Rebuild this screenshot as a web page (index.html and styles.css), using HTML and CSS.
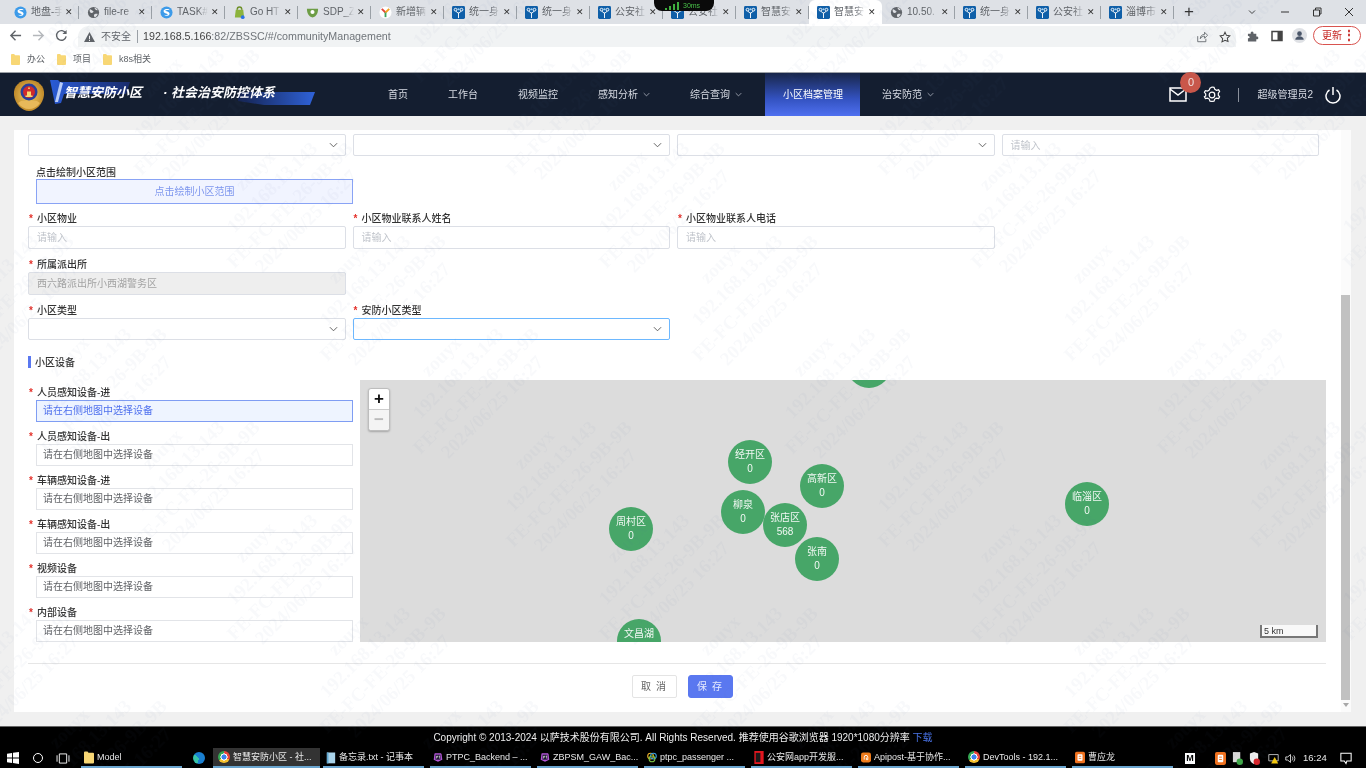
FILE: index.html
```html
<!DOCTYPE html>
<html lang="zh-CN">
<head>
<meta charset="utf-8">
<title>智慧安防小区</title>
<link rel="stylesheet" href="styles.css">
</head>
<body>
<svg class="defs" aria-hidden="true">
  <defs>
    <symbol id="i-sphere" viewBox="0 0 14 14"><circle cx="7" cy="7" r="6.5" fill="#3d9be9"/><path d="M4 4.5c2-2 6-1.5 6.5 0-2-.5-4-.5-5 .8 2 .2 5 1 4.800 3.200-.3 2-4.300 3-6 1 2 .6 4 .3 4.200-.8C8 8 3 8 4 4.500z" fill="#fff"/></symbol>
    <symbol id="i-globe" viewBox="0 0 14 14"><circle cx="7" cy="7" r="6" fill="#5f6368"/><path d="M3 3.500c2 0 2 1.500 3.500 2S6 8 4.500 7.500 2.500 5 3 3.500zM8 9c1.500-.8 3-.5 3.500-.5-.5 2-2 3.500-3 3.500S7 10 8 9zM8 2c1.500 0 3 1 3.500 2.500C10 5 8.500 4 8 2z" fill="#dfe1e5"/></symbol>
    <symbol id="i-go" viewBox="0 0 14 14"><path d="M3 4h8l1 8.500H2z" fill="#8cb33c"/><path d="M4.500 4c0-4 5-4 5 0" stroke="#6d8f28" fill="none" stroke-width="1.500"/><circle cx="10.500" cy="12" r="2" fill="#2a72e8"/></symbol>
    <symbol id="i-shield" viewBox="0 0 14 14"><path d="M1 3h12c0 5-2 8.500-6 9.500C3 11.500 1 8 1 3z" fill="#6d9d45"/><circle cx="7" cy="6.500" r="2.200" fill="#fff"/></symbol>
    <symbol id="i-y" viewBox="0 0 14 14"><circle cx="7" cy="7" r="6.500" fill="#fff"/><path d="M3 3l4 4" stroke="#e4453a" stroke-width="2"/><path d="M11 3L7 7" stroke="#f2a51f" stroke-width="2"/><path d="M7 7v5" stroke="#3ca55c" stroke-width="2"/></symbol>
    <symbol id="i-tree" viewBox="0 0 14 14"><rect width="14" height="14" rx="1.500" fill="#0f5fa8"/><path d="M7 13V7M7 8L4 5.500M7 8l3-2.500" stroke="#fff" stroke-width="1" fill="none"/><circle cx="3.800" cy="4" r="1.500" fill="none" stroke="#fff"/><circle cx="10.200" cy="4" r="1.500" fill="none" stroke="#fff"/><circle cx="7" cy="3.500" r="1.200" fill="#9fd0f5"/></symbol>
    <symbol id="i-folder" viewBox="0 0 10 12"><path d="M0 1a1 1 0 0 1 1-1h2.500l1 1.200H9a1 1 0 0 1 1 1V11a1 1 0 0 1-1 1H1a1 1 0 0 1-1-1z" fill="#f8d775"/></symbol>
    <symbol id="i-chev" viewBox="0 0 10 6"><path d="M1 1l4 4 4-4" fill="none" stroke="currentColor" stroke-width="1"/></symbol>
    <symbol id="i-orange" viewBox="0 0 12 14"><rect width="12" height="14" rx="2" fill="#f0711e"/><rect x="3" y="3" width="6" height="8" rx="1" fill="#fff"/><rect x="4.500" y="5" width="3" height="1" fill="#f0711e"/><rect x="4.500" y="7.500" width="3" height="1" fill="#f0711e"/></symbol>
    <symbol id="i-term" viewBox="0 0 14 14"><path d="M2 2a1 1 0 0 1 1-1h8l1 1 1 8-6 3-6-3z" fill="#b455d8"/><rect x="3.500" y="3" width="7" height="7" fill="#18112a"/><path d="M5 5v3.500M5 5h1.500v1.500H5M8 5h2M9 5v3.500" stroke="#fff" stroke-width=".8" fill="none"/></symbol>
    <pattern id="wm" x="185" y="100" width="372" height="372" patternUnits="userSpaceOnUse">
      <g id="wm-cell" transform="rotate(-45)" class="wm-text">
        <text y="-26">zouyx</text>
        <text y="-2">192.168.13.143</text>
        <text y="23">FE-FC-FE-26-9B-9B</text>
        <text y="46">2024/06/25 16:27</text>
      </g>
      <use href="#wm-cell" x="-93" y="-93"/>
      <use href="#wm-cell" x="-93" y="279"/>
      <use href="#wm-cell" x="0" y="372"/>
      <use href="#wm-cell" x="93" y="93"/>
      <use href="#wm-cell" x="93" y="465"/>
      <use href="#wm-cell" x="186" y="186"/>
      <use href="#wm-cell" x="279" y="-93"/>
      <use href="#wm-cell" x="279" y="279"/>
      <use href="#wm-cell" x="372" y="0"/>
      <use href="#wm-cell" x="372" y="372"/>
      <use href="#wm-cell" x="465" y="93"/>
      <use href="#wm-cell" x="465" y="465"/>
    </pattern>
  </defs>
</svg>

<div class="tabstrip">
  <div class="tab"><svg class="fav"><use href="#i-sphere"/></svg><span class="tab-t">地盘-手</span><span class="tab-x">✕</span></div>
  <div class="tab"><svg class="fav"><use href="#i-globe"/></svg><span class="tab-t">file-re</span><span class="tab-x">✕</span></div>
  <div class="tab"><svg class="fav"><use href="#i-sphere"/></svg><span class="tab-t">TASK#</span><span class="tab-x">✕</span></div>
  <div class="tab"><svg class="fav"><use href="#i-go"/></svg><span class="tab-t">Go HT</span><span class="tab-x">✕</span></div>
  <div class="tab"><svg class="fav"><use href="#i-shield"/></svg><span class="tab-t">SDP_Z</span><span class="tab-x">✕</span></div>
  <div class="tab"><svg class="fav"><use href="#i-y"/></svg><span class="tab-t">新增辆</span><span class="tab-x">✕</span></div>
  <div class="tab"><svg class="fav"><use href="#i-tree"/></svg><span class="tab-t">统一身</span><span class="tab-x">✕</span></div>
  <div class="tab"><svg class="fav"><use href="#i-tree"/></svg><span class="tab-t">统一身</span><span class="tab-x">✕</span></div>
  <div class="tab"><svg class="fav"><use href="#i-tree"/></svg><span class="tab-t">公安社</span><span class="tab-x">✕</span></div>
  <div class="tab"><svg class="fav"><use href="#i-tree"/></svg><span class="tab-t">公安社</span><span class="tab-x">✕</span></div>
  <div class="tab"><svg class="fav"><use href="#i-tree"/></svg><span class="tab-t">智慧安</span><span class="tab-x">✕</span></div>
  <div class="tab tab-active"><svg class="fav"><use href="#i-tree"/></svg><span class="tab-t">智慧安</span><span class="tab-x">✕</span></div>
  <div class="tab"><svg class="fav"><use href="#i-globe"/></svg><span class="tab-t">10.50.</span><span class="tab-x">✕</span></div>
  <div class="tab"><svg class="fav"><use href="#i-tree"/></svg><span class="tab-t">统一身</span><span class="tab-x">✕</span></div>
  <div class="tab"><svg class="fav"><use href="#i-tree"/></svg><span class="tab-t">公安社</span><span class="tab-x">✕</span></div>
  <div class="tab"><svg class="fav"><use href="#i-tree"/></svg><span class="tab-t">淄博市</span><span class="tab-x">✕</span></div>
  <span class="tab-plus">+</span>
  <div class="win-btns">
    <svg class="win-i" viewBox="0 0 10 10"><path d="M2 3.500l3 3 3-3" fill="none" stroke="#444" stroke-width="1"/></svg>
    <svg class="win-i win-min" viewBox="0 0 10 10"><path d="M1 5h8" stroke="#333" stroke-width="1"/></svg>
    <svg class="win-i win-res" viewBox="0 0 10 10"><path d="M1.500 3h6v6h-6zM3.500 3V1h5.500v6H7.500" fill="none" stroke="#333" stroke-width="1"/></svg>
    <svg class="win-i win-cl" viewBox="0 0 10 10"><path d="M1 1l8 8M9 1l-8 8" stroke="#333" stroke-width="1"/></svg>
  </div>
  <div class="netw"><svg class="netw-b" viewBox="0 0 16 8"><path d="M1 8V6h2v2zM5 8V4h2v4zM9 8V2h2v6zM13 8V0h2v8z" fill="#3fae3f"/></svg><span>30ms</span></div>
</div>

<div class="toolbar">
  <svg class="tb-i" viewBox="0 0 14 14"><path d="M13 7H2M7 2L2 7l5 5" fill="none" stroke="#5f6368" stroke-width="1.500"/></svg>
  <svg class="tb-i tb-fw" viewBox="0 0 14 14"><path d="M1 7h11M7 2l5 5-5 5" fill="none" stroke="#b4b7bb" stroke-width="1.500"/></svg>
  <svg class="tb-i tb-re" viewBox="0 0 14 14"><path d="M11.500 4.500A5.200 5.200 0 1 0 12 8" fill="none" stroke="#5f6368" stroke-width="1.500"/><path d="M12.500 1v4.500H8z" fill="#5f6368"/></svg>
  <div class="omni">
    <svg class="warn" viewBox="0 0 12 11"><path d="M6 0l6 11H0z" fill="#5f6368"/><path d="M5.500 4h1v4h-1zM5.500 8.800h1v1h-1z" fill="#fff"/></svg>
    <span class="unsafe">不安全</span><span class="omni-sep"></span>
    <span class="url"><b>192.168.5.166</b>:82/ZBSSC/#/communityManagement</span>
    <svg class="om-i om-share" viewBox="0 0 14 14"><path d="M2 6v6.500h9.500V9M5 9c0-3 2-5 5-5V1.500L13.500 5 10 8.500V6C8 6 6 7 5 9z" fill="none" stroke="#5f6368" stroke-width="1"/></svg>
    <svg class="om-i om-star" viewBox="0 0 14 14"><path d="M7 1.500l1.700 3.600 3.900.5-2.900 2.700.8 3.900L7 10.800l-3.500 1.900.8-3.900L1.400 5.600l3.900-.5z" fill="none" stroke="#444" stroke-width="1.200"/></svg>
  </div>
  <svg class="tb-i tb-puz" viewBox="0 0 14 14"><path d="M1 5h3c-.5-3 3.500-3 3 0h3v3c3-.5 3 3.500 0 3v2.500H1V10c2.500.5 2.500-3 0-2.500z" fill="#5f6368"/></svg>
  <svg class="tb-i tb-side" viewBox="0 0 12 12"><rect x="1" y="1.500" width="10" height="9" fill="none" stroke="#444" stroke-width="1.500"/><rect x="6.500" y="1.500" width="4.500" height="9" fill="#444"/></svg>
  <svg class="tb-i tb-ava" viewBox="0 0 16 16"><circle cx="8" cy="8" r="8" fill="#dfe1e5"/><circle cx="8" cy="6" r="2.500" fill="#4a5568"/><path d="M3.500 12.500c0-5 9-5 9 0z" fill="#4a5568"/></svg>
  <div class="update"><span>更新</span><span class="upd-dots">⋮</span></div>
</div>

<div class="bookmarks">
  <span class="bm"><svg class="bm-i"><use href="#i-folder"/></svg>办公</span>
  <span class="bm"><svg class="bm-i"><use href="#i-folder"/></svg>项目</span>
  <span class="bm"><svg class="bm-i"><use href="#i-folder"/></svg>k8s相关</span>
</div>

<header class="nav">
  <svg class="logo" viewBox="0 0 320 43">
    <defs>
      <linearGradient id="lg1" x1="0" x2="1"><stop offset="0" stop-color="#2b5fe0"/><stop offset="1" stop-color="#1a2c6e"/></linearGradient>
      <linearGradient id="lg2" x1="0" x2="1"><stop offset="0" stop-color="#14224f"/><stop offset="1" stop-color="#2f62d8"/></linearGradient>
      <radialGradient id="gold"><stop offset="0" stop-color="#f3cf6a"/><stop offset="1" stop-color="#c08a2a"/></radialGradient>
    </defs>
    <path d="M14 22c-1-9 6-15 15-15s16 6 15 15c-1 9-8 16-15 16s-14-7-15-16z" fill="url(#gold)"/>
    <path d="M18 30c3 4 7 6 11 6s8-2 11-6l-3-2H21z" fill="#e8b95a"/>
    <circle cx="29" cy="19" r="8.500" fill="#2a3f9a"/>
    <circle cx="29" cy="19" r="6" fill="#cf2a2c"/>
    <path d="M25.500 22.500h7v1.500h-7zM27 18.500h4v4h-4z" fill="#f7d86e"/>
    <path d="M29 13.500l1 2.500h-2z" fill="#f7d86e"/>
    <path d="M50 7h8l2 2 70 0-4 12H64l-3 9-6 1z" fill="url(#lg1)" opacity=".95"/>
    <path d="M60 9L55 29h3l5-19z" fill="#b9cdf8"/>
    <path d="M238 19h77l-5 13h-46l-26-4z" fill="url(#lg2)"/>
    <text x="64" y="24" class="logo-a">智慧安防小区</text>
    <text x="163" y="24" class="logo-b">· 社会治安防控体系</text>
  </svg>
  <nav class="menu">
    <span class="mi">首页</span>
    <span class="mi">工作台</span>
    <span class="mi">视频监控</span>
    <span class="mi">感知分析<svg class="mi-c"><use href="#i-chev"/></svg></span>
    <span class="mi">综合查询<svg class="mi-c"><use href="#i-chev"/></svg></span>
    <span class="mi mi-active">小区档案管理</span>
    <span class="mi">治安防范<svg class="mi-c"><use href="#i-chev"/></svg></span>
  </nav>
  <div class="user">
    <span class="mail">
      <svg class="mail-i" viewBox="0 0 18 15"><path d="M1 1h16v13H1zM1 2l8 6 8-6" fill="none" stroke="#fff" stroke-width="1.500"/></svg>
      <span class="badge">0</span>
    </span>
    <svg class="gear" viewBox="0 0 18 18"><path d="M9 1l2 .3.8 2 1.700 1 2.100-.5 1 1.700-1.300 1.700v2l1.300 1.600-1 1.800-2.100-.5-1.700 1-.8 2-2 .3-2-.3-.8-2-1.700-1-2.100.5-1-1.800L2.700 10V8L1.400 6.300l1-1.700 2.100.5 1.700-1 .8-2z" fill="none" stroke="#fff" stroke-width="1.200"/><circle cx="9" cy="9" r="2.800" fill="none" stroke="#fff" stroke-width="1.200"/></svg>
    <span class="user-sep"></span>
    <span class="uname">超级管理员2</span>
    <svg class="power" viewBox="0 0 16 18"><path d="M4.500 4a7 7 0 1 0 7 0M8 1v8" fill="none" stroke="#fff" stroke-width="1.500"/></svg>
  </div>
</header>

<main class="page">
  <section class="card">
    <div class="form">
      <div class="grid4 r-first">
        <div class="sel"><svg class="chev"><use href="#i-chev"/></svg></div>
        <div class="sel"><svg class="chev"><use href="#i-chev"/></svg></div>
        <div class="sel"><svg class="chev"><use href="#i-chev"/></svg></div>
        <div class="inp ph">请输入</div>
      </div>

      <div class="draw">
        <div class="lab lab-plain">点击绘制小区范围</div>
        <div class="draw-btn">点击绘制小区范围</div>
      </div>

      <div class="grid4 r-a">
        <div><div class="lab"><i>*</i>小区物业</div><div class="inp ph">请输入</div></div>
        <div><div class="lab"><i>*</i>小区物业联系人姓名</div><div class="inp ph">请输入</div></div>
        <div><div class="lab"><i>*</i>小区物业联系人电话</div><div class="inp ph">请输入</div></div>
      </div>
      <div class="grid4 r-b">
        <div><div class="lab"><i>*</i>所属派出所</div><div class="inp dis">西六路派出所小西湖警务区</div></div>
      </div>
      <div class="grid4 r-b">
        <div><div class="lab"><i>*</i>小区类型</div><div class="sel"><svg class="chev"><use href="#i-chev"/></svg></div></div>
        <div><div class="lab"><i>*</i>安防小区类型</div><div class="sel sel-on"><svg class="chev"><use href="#i-chev"/></svg></div></div>
      </div>

      <h2 class="sec">小区设备</h2>

      <div class="dev">
        <div class="dev-l">
          <div class="df"><div class="lab"><i>*</i>人员感知设备-进</div><div class="dv dv-on">请在右侧地图中选择设备</div></div>
          <div class="df"><div class="lab"><i>*</i>人员感知设备-出</div><div class="dv">请在右侧地图中选择设备</div></div>
          <div class="df"><div class="lab"><i>*</i>车辆感知设备-进</div><div class="dv">请在右侧地图中选择设备</div></div>
          <div class="df"><div class="lab"><i>*</i>车辆感知设备-出</div><div class="dv">请在右侧地图中选择设备</div></div>
          <div class="df"><div class="lab"><i>*</i>视频设备</div><div class="dv">请在右侧地图中选择设备</div></div>
          <div class="df"><div class="lab"><i>*</i>内部设备</div><div class="dv">请在右侧地图中选择设备</div></div>
        </div>
        <div class="map">
          <div class="zoomc"><span class="z-in">+</span><span class="z-out">−</span></div>
          <div class="pin p-top"></div>
          <div class="pin p-jk">经开区<br>0</div>
          <div class="pin p-gx">高新区<br>0</div>
          <div class="pin p-lq">柳泉<br>0</div>
          <div class="pin p-zd">张店区<br>568</div>
          <div class="pin p-zn">张南<br>0</div>
          <div class="pin p-lz">临淄区<br>0</div>
          <div class="pin p-zc">周村区<br>0</div>
          <div class="pin p-wc">文昌湖</div>
          <div class="scale">5 km</div>
        </div>
      </div>

      <div class="actions">
        <button class="btn">取 消</button>
        <button class="btn btn-pri">保 存</button>
      </div>
    </div>
    <div class="vbar"><div class="vthumb"></div><div class="varrow"></div></div>
  </section>
</main>

<footer class="foot">Copyright © 2013-2024 以萨技术股份有限公司. All Rights Reserved. 推荐使用谷歌浏览器 1920*1080分辨率 <a class="dl">下载</a></footer>

<div class="taskbar">
  <svg class="tk-win" viewBox="0 0 13 13"><path d="M0 2l5.500-1v5H0zM6.500.8L13 0v6H6.500zM0 7h5.500v5L0 11zM6.500 7H13v6l-6.500-1z" fill="#fff"/></svg>
  <span class="tk-cort"></span>
  <svg class="tk-view" viewBox="0 0 15 12"><path d="M3.500 1h8v10h-8zM1 2.500v7M14 2.500v7" fill="none" stroke="#fff" stroke-width="1"/></svg>
  <div class="tk tk-model"><svg class="tk-i"><use href="#i-folder"/></svg>Model</div>
  <span class="tk-edge"></span>
  <div class="tk tk-act"><span class="chrome"></span>智慧安防小区 - 社...</div>
  <div class="tk"><svg class="tk-i" viewBox="0 0 12 14"><path d="M1 1h10v13H1z" fill="#a9d3ea"/><path d="M1 1h2v13H1z" fill="#5fa6cf"/></svg>备忘录.txt - 记事本</div>
  <div class="tk"><svg class="tk-i"><use href="#i-term"/></svg>PTPC_Backend – ...</div>
  <div class="tk"><svg class="tk-i"><use href="#i-term"/></svg>ZBPSM_GAW_Bac...</div>
  <div class="tk"><svg class="tk-i" viewBox="0 0 14 14"><circle cx="5" cy="5" r="4" fill="none" stroke="#f0b429" stroke-width="1.500"/><circle cx="9" cy="5" r="4" fill="none" stroke="#3aa0e0" stroke-width="1.500"/><circle cx="7" cy="9" r="4" fill="none" stroke="#7ac143" stroke-width="1.500"/></svg>ptpc_passenger ...</div>
  <div class="tk"><svg class="tk-i" viewBox="0 0 10 14"><rect width="10" height="14" fill="#e3161f"/><rect x="1.500" y="2" width="5" height="10" fill="#1a1a1a"/></svg>公安网app开发服...</div>
  <div class="tk"><svg class="tk-i" viewBox="0 0 14 14"><rect width="14" height="14" rx="3" fill="#f07c1a"/><path d="M4.500 10V6.500a2.500 2.500 0 0 1 5 0V10h-2V7" stroke="#fff" fill="none" stroke-width="1.300"/></svg>Apipost-基于协作...</div>
  <div class="tk"><span class="chrome"></span>DevTools - 192.1...</div>
  <div class="tk"><svg class="tk-i"><use href="#i-orange"/></svg>曹应龙</div>
  <div class="tray">
    <span class="tr-m">M</span>
    <svg class="tr-i tr-o"><use href="#i-orange"/></svg>
    <svg class="tr-i" viewBox="0 0 12 14"><rect x="1" y="0" width="8" height="11" fill="#d8d8d8"/><circle cx="8.500" cy="10.500" r="3.500" fill="#3fa648"/></svg>
    <svg class="tr-i" viewBox="0 0 12 14"><path d="M1 1.500L5.500 0 10 1.500V7c0 3-2 5-4.500 6C3 12 1 10 1 7z" fill="#eee"/><circle cx="8.500" cy="10.500" r="3.500" fill="#d8262c"/></svg>
    <svg class="tr-i tr-y" viewBox="0 0 14 14"><path d="M1 2h12v8H1z" fill="none" stroke="#ddd"/><path d="M8.500 5L13 13.500H4z" fill="#f2c811"/></svg>
    <svg class="tr-i" viewBox="0 0 14 14"><path d="M1 5h2.500L7 2v10L3.500 9H1z" fill="none" stroke="#fff"/><path d="M9 4.500c1.200 1.500 1.200 3.500 0 5M11 3c2 2.500 2 5.500 0 8" fill="none" stroke="#fff"/></svg>
    <span class="tr-time">16:24</span>
    <svg class="tr-n" viewBox="0 0 14 14"><path d="M1 1h12v9H8l-1 3-2-3H1z" fill="none" stroke="#fff" stroke-width="1.200"/></svg>
  </div>
</div>

<svg class="watermark" aria-hidden="true" width="1366" height="768"><rect width="1366" height="768" fill="url(#wm)"/></svg>
</body>
</html>
```

FILE: styles.css
```css
* { box-sizing: border-box; }
html, body { margin: 0; padding: 0; }
body {
  width: 1366px;
  height: 768px;
  overflow: hidden;
  display: flex;
  flex-direction: column;
  font: 10px/1.2 "Liberation Sans", "Noto Sans CJK SC", sans-serif;
  color: #333;
  background: #f0f0f0;
  position: relative;
  filter: blur(.3px);
}
.defs { width: 0; height: 0; position: absolute; }

/* Browser tab strip */
.tabstrip {
  height: 24px;
  flex: none;
  background: #dee1e6;
  display: flex;
  align-items: center;
  padding-left: 6px;
  position: relative;
}
.tab {
  width: 73px;
  height: 24px;
  flex: none;
  display: flex;
  align-items: center;
  padding: 0 6px 0 8px;
  position: relative;
  color: #5f6368;
}
.tab::after {
  content: "";
  position: absolute;
  right: 0;
  top: 6px;
  height: 13px;
  width: 1px;
  background: #9aa0a6;
}
.tab-active {
  background: #fff;
  border-radius: 6px 6px 0 0;
}
.tab-active::after { display: none; }
.fav { width: 13px; height: 13px; flex: none; margin-right: 4px; }
.tab-t {
  width: 34px;
  flex: none;
  overflow: hidden;
  white-space: nowrap;
  -webkit-mask-image: linear-gradient(90deg, #000 60%, transparent 92%);
  mask-image: linear-gradient(90deg, #000 60%, transparent 92%);
}
.tab-x { margin-left: auto; font-size: 9px; color: #333; margin-right: 0; }
.tab-plus { margin-left: 10px; font-size: 17px; color: #333; line-height: 20px; }
.win-btns { margin-left: auto; display: flex; align-items: center; padding-right: 12px; }
.win-i { width: 10px; height: 10px; display: block; margin-left: 0; }
.win-min { margin-left: 23px; }
.win-res { margin-left: 22px; }
.win-cl { margin-left: 22px; }
.netw {
  position: absolute;
  left: 654px;
  top: 0;
  width: 60px;
  height: 11px;
  background: #0a0a0a;
  border-radius: 0 0 8px 8px;
  color: #49c149;
  font-size: 7px;
  line-height: 10px;
  display: flex;
  align-items: center;
  padding-left: 10px;
}
.netw-b { width: 16px; height: 8px; margin-right: 3px; }

/* Browser toolbar */
.toolbar {
  height: 23px;
  flex: none;
  background: #fff;
  display: flex;
  align-items: center;
  padding-left: 9px;
}
.tb-i { width: 13px; height: 13px; flex: none; }
.tb-fw { margin-left: 10px; }
.tb-re { margin-left: 10px; }
.omni {
  width: 1158px;
  height: 21px;
  margin: 2px 0 0 10px;
  background: #f1f3f4;
  border-radius: 11px 11px 0 0;
  display: flex;
  align-items: center;
  padding: 0 5px 0 6px;
  flex: none;
}
.warn { width: 11px; height: 10px; flex: none; }
.unsafe { margin-left: 6px; font-size: 10px; color: #5f6368; white-space: nowrap; flex: none; }
.omni-sep { width: 1px; height: 13px; background: #9aa0a6; margin: 0 5px 0 6px; flex: none; }
.url { font-size: 10.700px; color: #70757a; white-space: nowrap; }
.url b { font-weight: 400; color: #444; }
.om-i { width: 12px; height: 12px; flex: none; }
.om-share { margin-left: auto; }
.om-star { margin-left: 11px; }
.tb-puz { margin-left: 11px; }
.tb-side { margin-left: 11px; width: 12px; height: 12px; }
.tb-ava { margin-left: 9px; width: 15px; height: 15px; }
.update {
  margin-left: 6px;
  width: 48px;
  height: 19px;
  border: 1px solid #d9534f;
  border-radius: 10px;
  color: #c5221f;
  display: flex;
  align-items: center;
  justify-content: space-between;
  padding: 0 5px 0 8px;
  flex: none;
  background: #fff;
}
.upd-dots { font-weight: 700; font-size: 12px; }

/* Bookmarks */
.bookmarks {
  height: 26px;
  flex: none;
  background: #fff;
  border-bottom: 1px solid #9da1a7;
  display: flex;
  align-items: center;
  padding-left: 11px;
  color: #5f6368;
  font-size: 9px;
}
.bm { display: flex; align-items: center; margin-right: 12px; }
.bm-i { width: 9px; height: 11px; margin-right: 7px; flex: none; }

/* App navigation */
.nav {
  height: 43px;
  flex: none;
  background: #141e30;
  display: flex;
  color: #d8dce4;
}
.logo { width: 320px; height: 43px; flex: none; }
.logo-a, .logo-b { fill: #fff; font-weight: 700; font-style: italic; }
.logo-a { font-size: 13px; }
.logo-b { font-size: 13px; }
.menu { display: flex; margin-left: 48px; }
.mi {
  display: flex;
  align-items: center;
  padding: 0 20px;
  white-space: nowrap;
  color: #d8dce4;
}
.mi-c { width: 7px; height: 5px; margin-left: 5px; color: #c4c9d4; }
.mi-active {
  margin: 0 2px 0 3px;
  padding: 0 17px 0 18px;
  color: #fff;
  background: linear-gradient(180deg, #18264a 0%, #3352c0 60%, #4f70f0 100%);
}
.user {
  margin-left: auto;
  display: flex;
  align-items: center;
  padding-right: 25px;
  color: #d8dce4;
}
.mail { position: relative; width: 18px; height: 15px; display: block; }
.mail-i { width: 18px; height: 15px; display: block; }
.badge {
  position: absolute;
  left: 11px;
  top: -15px;
  width: 21px;
  height: 21px;
  border-radius: 50%;
  background: #c9574a;
  color: #f4e4e0;
  font-size: 11px;
  line-height: 21px;
  text-align: center;
}
.gear { width: 18px; height: 18px; margin-left: 16px; flex: none; }
.user-sep { width: 1px; height: 14px; background: #8a909c; margin: 0 18px 0 17px; }
.uname { white-space: nowrap; margin-left: 0; }
.power { width: 16px; height: 18px; margin-left: 12px; flex: none; }

/* Page */
.page {
  height: 610px;
  flex: none;
  padding: 14px 15px 14px 14px;
  background: #f0f0f0;
}
.card {
  height: 582px;
  background: #fff;
  display: flex;
  overflow: hidden;
}
.form { width: 1327px; flex: none; padding: 4px 15px 0 14px; }
.grid4 {
  display: grid;
  grid-template-columns: repeat(4, 317.500px);
  column-gap: 7px;
}
.r-a { margin-top: 7px; }
.r-b { margin-top: 8px; }
.lab {
  height: 14px;
  line-height: 16px;
  margin-bottom: 1px;
  font-size: 10px;
  font-weight: 500;
  color: #333;
  white-space: nowrap;
}
.lab i {
  color: #e4322b;
  font-style: normal;
  font-weight: 700;
  margin-right: 3px;
  display: inline-block;
  width: 6px;
  text-align: center;
  font-size: 10px;
}
.lab-plain { padding-left: 8px; margin-bottom: 0; }
.sel {
  height: 22px;
  border: 1px solid #dcdfe6;
  border-radius: 2px;
  background: #fff;
  display: flex;
  align-items: center;
  justify-content: flex-end;
  padding-right: 7px;
  color: #555;
}
.sel-on { border-color: #6db8ff; }
.chev { width: 9px; height: 6px; }
.inp {
  height: 23px;
  border: 1px solid #dcdfe6;
  border-radius: 2px;
  line-height: 22px;
  padding-left: 8px;
  white-space: nowrap;
}
.r-first .inp { height: 22px; line-height: 21px; }
.ph { color: #bfc3ca; }
.dis { background: #eeeeee; color: #a3a3a3; }
.draw { margin-top: 9px; }
.draw-btn {
  margin-left: 8px;
  width: 317px;
  height: 25px;
  line-height: 23px;
  text-align: center;
  background: #f1f4ff;
  border: 1px solid #89a3f5;
  color: #7e96ee;
}
.sec {
  margin: 16px 0 0;
  height: 12px;
  line-height: 14px;
  border-left: 3px solid #5a78f0;
  padding-left: 4px;
  font-size: 10px;
  font-weight: 500;
  color: #333;
}

.dev { display: flex; margin-top: 12px; }
.dev-l { width: 325px; flex: none; padding-top: 5px; }
.df { margin-bottom: 7px; }
.df:last-child { margin-bottom: 0; }
.dv {
  margin-left: 8px;
  width: 317px;
  height: 22px;
  line-height: 20px;
  border: 1px solid #e2e4e8;
  background: #fff;
  padding-left: 6px;
  color: #606266;
  white-space: nowrap;
}
.dv-on { background: #eef4ff; border-color: #7f9df3; color: #4f70ee; }

.map {
  margin-left: 7px;
  width: 966px;
  height: 262px;
  background: #dcdcdc;
  position: relative;
  overflow: hidden;
}
.zoomc {
  position: absolute;
  left: 8px;
  top: 8px;
  width: 22px;
  height: 43px;
  background: #fff;
  border-radius: 3px;
  border: 1px solid #bdbdbd;
  display: flex;
  flex-direction: column;
  box-shadow: 0 1px 2px rgba(0,0,0,.25);
}
.z-in, .z-out {
  height: 21px;
  line-height: 20px;
  text-align: center;
  font: 700 17px/20px "Liberation Sans", sans-serif;
  color: #111;
}
.z-out { background: #f4f4f4; color: #bbb; border-top: 1px solid #ccc; border-radius: 0 0 3px 3px; }
.pin {
  position: absolute;
  width: 44px;
  height: 44px;
  border-radius: 50%;
  background: #47a668;
  color: #f2f8f4;
  text-align: center;
  line-height: 14px;
  padding-top: 8px;
  font-size: 10px;
}
.p-top { left: 487px; top: -36px; }
.p-jk { left: 368px; top: 60px; }
.p-gx { left: 440px; top: 84px; }
.p-lq { left: 361px; top: 110px; }
.p-zd { left: 403px; top: 123px; }
.p-zn { left: 435px; top: 157px; }
.p-lz { left: 705px; top: 102px; }
.p-zc { left: 249px; top: 127px; }
.p-wc { left: 257px; top: 239px; }
.scale {
  position: absolute;
  right: 8px;
  bottom: 4px;
  width: 58px;
  height: 13px;
  border: 1px solid #777;
  border-width: 0 2px 2px 2px;
  background: rgba(255,255,255,.8);
  color: #333;
  font-size: 9px;
  line-height: 12px;
  padding-left: 2px;
}

.actions {
  margin-top: 21px;
  border-top: 1px solid #e6e6e6;
  padding: 11px 0 0 10px;
  display: flex;
  justify-content: center;
  gap: 11px;
}
.btn {
  width: 45px;
  height: 23px;
  border: 1px solid #e4e4e4;
  border-radius: 2px;
  background: #fff;
  color: #666;
  font: 10px/1 "Liberation Sans", "Noto Sans CJK SC", sans-serif;
  letter-spacing: 1px;
  padding: 0;
}
.btn-pri { background: #5a78f0; border-color: #5a78f0; color: #e6ebff; border-radius: 3px; }

.vbar { width: 10px; height: 582px; margin-left: 0; flex: none; display: flex; flex-direction: column; align-items: flex-start; background: #fbfbfb; }
.vthumb { width: 9px; height: 405px; margin-top: 165px; background: #c1c1c1; }
.varrow {
  margin: 3px 0 0 1.500px;
  width: 0;
  height: 0;
  border: 3px solid transparent;
  border-top: 4px solid #a8a8a8;
}

/* Footer and OS taskbar */
.foot {
  height: 22px;
  flex: none;
  background: #000;
  border-top: 1px solid #666;
  color: #eee;
  line-height: 21px;
  text-align: center;
  font-size: 10px;
  white-space: nowrap;
}
.dl { color: #4a74e8; }
.taskbar {
  height: 20px;
  flex: none;
  background: #000;
  display: flex;
  align-items: center;
  color: #e8e8e8;
  padding-left: 7px;
  font-size: 9px;
}
.tk-win { width: 12px; height: 12px; flex: none; }
.tk-cort { width: 10px; height: 10px; border: 1.500px solid #fff; border-radius: 50%; margin-left: 14px; flex: none; }
.tk-view { width: 14px; height: 11px; margin-left: 13px; flex: none; }
.tk {
  width: 101px;
  height: 20px;
  flex: none;
  margin-left: 6px;
  display: flex;
  align-items: center;
  padding-left: 3px;
  border-bottom: 2px solid #6aa5cf;
  white-space: nowrap;
  overflow: hidden;
}
.tk-model { margin-left: 11px; }
.tk-edge {
  width: 12px;
  height: 12px;
  border-radius: 50%;
  margin: 0 8px 0 11px;
  background: conic-gradient(#1a7fd0 0 55%, #37c4a8 55% 85%, #1a7fd0 85%);
  flex: none;
}
.tk-act { margin-left: 0; background: #333; width: 107px; margin-right: -3px; padding-left: 5px; }
.tk-act + .tk { margin-left: 6px; }
.tk-i { width: 10px; height: 13px; margin-right: 3px; flex: none; }
.chrome {
  width: 12px;
  height: 12px;
  border-radius: 50%;
  margin-right: 3px;
  flex: none;
  background:
    radial-gradient(circle, #3b82f0 0 2.500px, #fff 2.600px 3.500px, transparent 3.600px),
    conic-gradient(#e8453c 0 33%, #f6c02d 33% 66%, #34a853 66%);
}
.tray { margin-left: 12px; display: flex; align-items: center; }
.tr-m { width: 10px; height: 11px; background: #fff; color: #000; font-weight: 700; font-size: 9px; line-height: 11px; text-align: center; }
.tr-i { width: 11px; height: 13px; margin-left: 6px; flex: none; }
.tr-o { margin-left: 20px; }
.tr-y { margin-left: 8px; }
.tr-time { margin-left: 7px; font-size: 9.500px; }
.tr-n { width: 12px; height: 13px; margin-left: 13px; }

/* Screen watermark across the window */
.watermark {
  position: absolute;
  left: 0;
  top: 0;
  width: 1366px;
  height: 768px;
  pointer-events: none;
}
.wm-text {
  font: 700 19px "Liberation Serif", serif;
  text-anchor: middle;
  fill: #4a5a9c;
  fill-opacity: .04;
}
```
